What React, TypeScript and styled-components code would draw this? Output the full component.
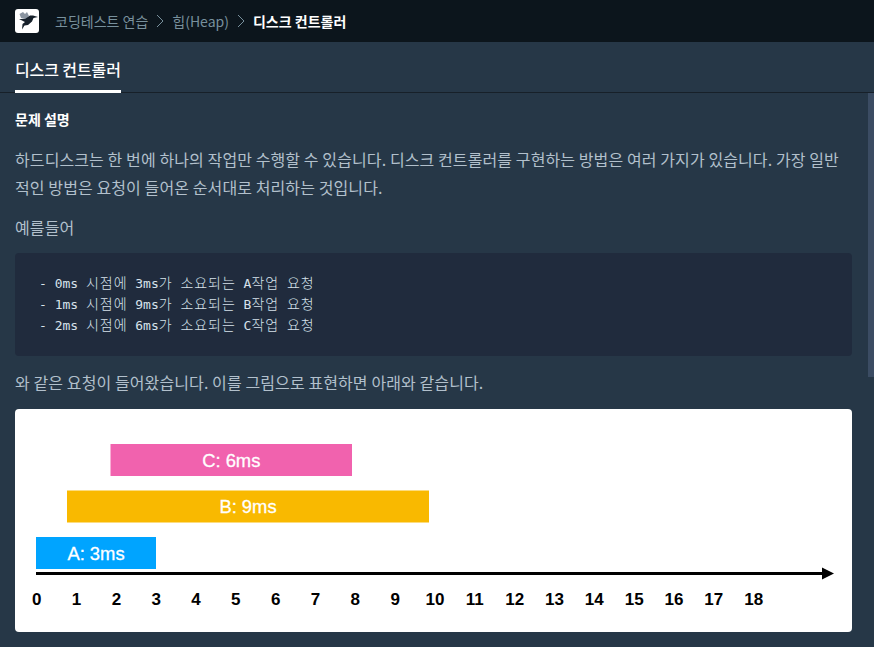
import React from 'react'
import styled, { createGlobalStyle } from 'styled-components'

const GlobalStyle = createGlobalStyle`
  html, body {
    margin: 0;
    padding: 0;
    height: 100%;
    overflow: hidden;
    background: #263747;
    font-family: "Noto Sans CJK KR", "Noto Sans", sans-serif;
  }
`

const Page = styled.div`
  width: 874px;
  height: 647px;
  display: flex;
  flex-direction: column;
  overflow: hidden;
`

const Header = styled.header`
  height: 42px;
  flex: none;
  display: flex;
  align-items: center;
  padding-left: 15px;
  background: #0c151c;
  font-size: 14px;
`

const LogoBox = styled.div`
  width: 24px;
  height: 24px;
  margin-right: 16px;
  border-radius: 3px;
  background: #fff;
  overflow: hidden;
`

const Crumb = styled.span<{ $current?: boolean }>`
  color: ${(p) => (p.$current ? '#fff' : '#78909c')};
  font-weight: ${(p) => (p.$current ? 700 : 400)};
  line-height: 20px;
`

const Chevron = styled.svg`
  width: 8px;
  height: 14px;
  margin: 0 8px 0 8px;
  flex: none;
`

const TabBar = styled.div`
  height: 51px;
  flex: none;
  box-sizing: border-box;
  display: flex;
  padding-left: 15px;
  border-bottom: 1px solid #172029;
`

const Tab = styled.div`
  height: 51px;
  box-sizing: border-box;
  padding-top: 15px;
  border-bottom: 3px solid #fff;
  color: #fff;
  font-size: 16px;
  font-weight: 500;
  line-height: 24px;
  letter-spacing: -0.1px;
`

const Body = styled.div`
  position: relative;
  flex: 1;
  padding: 16px 22px 0 15px;
`

const ScrollThumb = styled.div`
  position: absolute;
  top: 0;
  right: 0;
  width: 6px;
  height: 284px;
  background: #3b4c63;
`

const Heading = styled.h6`
  margin: 0 0 16px;
  color: #fff;
  font-size: 14px;
  font-weight: 700;
  line-height: 20px;
`

const Paragraph = styled.p`
  margin: 0 0 12px;
  color: #b2c0cc;
  font-size: 16px;
  line-height: 28px;
  letter-spacing: 0.1px;
`

const CodeBlock = styled.pre`
  margin: 0 0 12px;
  height: 103px;
  box-sizing: border-box;
  padding: 20px 24px;
  border-radius: 4px;
  background: #202b3d;
  color: #d7e2eb;
  font-family: "DejaVu Sans Mono", "Noto Sans CJK KR", monospace;
  font-size: 13px;
  line-height: 21px;
`

const CodeLine = styled.div`
  height: 21px;
  white-space: pre;
`

const Hangul = styled.span`
  font-family: "Noto Sans CJK KR", sans-serif;
  font-size: 14px;
  font-weight: 300;
  letter-spacing: 0.95px;
  line-height: 1;
`

const ChartCard = styled.div`
  height: 223px;
  margin-top: 13px;
  border-radius: 4px;
  background: #fff;
  overflow: hidden;
`

const ChartSvg = styled.svg`
  display: block;
  font-family: "Liberation Sans", Arial, sans-serif;
`

const bars = [
  { label: 'C: 6ms', x: 95.5, y: 35, w: 241.5, fill: '#f162ae' },
  { label: 'B: 9ms', x: 52, y: 81.5, w: 362, fill: '#f9b900' },
  { label: 'A: 3ms', x: 21, y: 128, w: 120, fill: '#00a4ff' },
]

const ticks = Array.from({ length: 19 }, (_, i) => i)

const codeLines = [
  '- 0ms 시점에 3ms가 소요되는 A작업 요청',
  '- 1ms 시점에 9ms가 소요되는 B작업 요청',
  '- 2ms 시점에 6ms가 소요되는 C작업 요청',
]

const Timeline = () => (
  <ChartSvg width="837" height="223" viewBox="0 0 837 223">
    {bars.map((b) => (
      <g key={b.label}>
        <rect x={b.x} y={b.y} width={b.w} height={32} fill={b.fill} />
        <text
          x={b.x + b.w / 2}
          y={b.y + 22.5}
          fill="#fff"
          stroke="#fff"
          strokeWidth="0.3"
          fontSize="18.4"
          textAnchor="middle"
        >
          {b.label}
        </text>
      </g>
    ))}
    <rect x="21" y="163" width="788" height="3" fill="#000" />
    <path d="M807 158.5 L819 164.5 L807 170.5 Z" fill="#000" />
    {ticks.map((t) => (
      <text
        key={t}
        x={21.7 + t * 39.83}
        y="196"
        fill="#000"
        fontSize="17"
        fontWeight="700"
        textAnchor="middle"
      >
        {t}
      </text>
    ))}
  </ChartSvg>
)

const Logo = () => (
  <svg width="24" height="24" viewBox="0 0 24 24">
    <path d="M4.5 5 L8 3 L10 5 L12 3 L14 7 L11 10.5 L6 9 Z" fill="#8a94a0" />
    <path
      d="M4 10 L10 10 L15 6.5 L18 6.5 L23 8 L18.5 9 L17 12.5 L13 16 L9.5 16.5 L7 20.5 L7.5 15 L10 13 Z"
      fill="#17212b"
    />
  </svg>
)

const Arrow = () => (
  <Chevron viewBox="0 0 8 14">
    <path d="M1 1 L7 7 L1 13" fill="none" stroke="#78909c" strokeWidth="1" />
  </Chevron>
)

const renderCode = (line: string) =>
  line.split(/([가-힣]+)/).map((part, i) =>
    i % 2 === 1 ? <Hangul key={i}>{part}</Hangul> : part,
  )

export default function App() {
  return (
    <Page>
      <GlobalStyle />
      <Header>
        <LogoBox>
          <Logo />
        </LogoBox>
        <Crumb>코딩테스트 연습</Crumb>
        <Arrow />
        <Crumb>힙(Heap)</Crumb>
        <Arrow />
        <Crumb $current>디스크 컨트롤러</Crumb>
      </Header>
      <TabBar>
        <Tab>디스크 컨트롤러</Tab>
      </TabBar>
      <Body>
        <ScrollThumb />
        <Heading>문제 설명</Heading>
        <Paragraph>
          하드디스크는 한 번에 하나의 작업만 수행할 수 있습니다. 디스크 컨트롤러를 구현하는 방법은 여러 가지가 있습니다. 가장 일반적인 방법은 요청이 들어온 순서대로 처리하는 것입니다.
        </Paragraph>
        <Paragraph>예를들어</Paragraph>
        <CodeBlock>
          {codeLines.map((line) => (
            <CodeLine key={line}>{renderCode(line)}</CodeLine>
          ))}
        </CodeBlock>
        <Paragraph>와 같은 요청이 들어왔습니다. 이를 그림으로 표현하면 아래와 같습니다.</Paragraph>
        <ChartCard>
          <Timeline />
        </ChartCard>
      </Body>
    </Page>
  )
}
